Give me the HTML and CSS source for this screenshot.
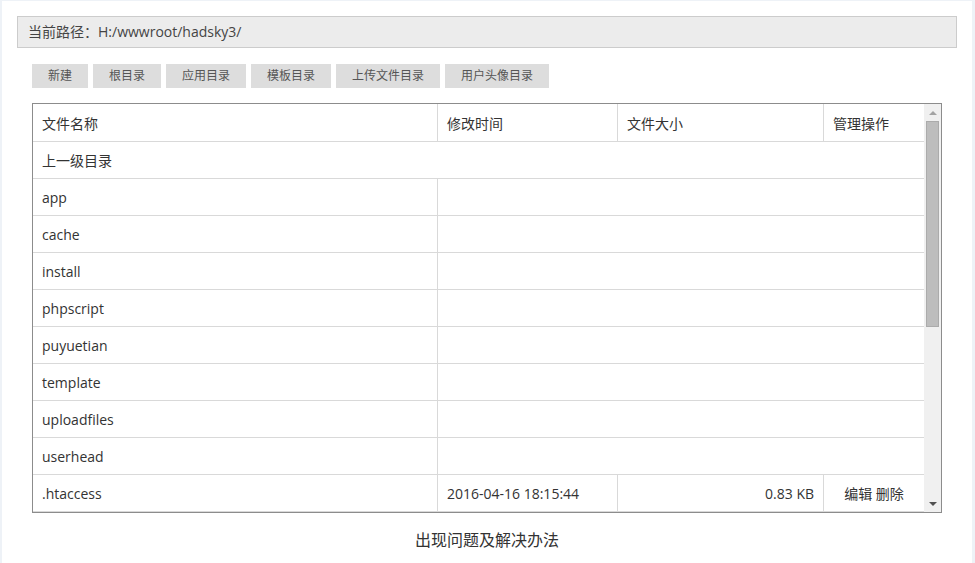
FILE: index.html
```html
<!DOCTYPE html>
<html lang="zh-CN">
<head>
<meta charset="utf-8">
<title>文件管理</title>
<link rel="stylesheet" href="styles.css">
</head>
<body>
<div class="panel">
  <div class="path">当前路径：H:/wwwroot/hadsky3/</div>
  <div class="inner">
    <div class="btns">
      <span class="btn">新建</span>
      <span class="btn">根目录</span>
      <span class="btn">应用目录</span>
      <span class="btn">模板目录</span>
      <span class="btn">上传文件目录</span>
      <span class="btn">用户头像目录</span>
    </div>
    <div class="box">
      <div class="tarea">
        <table class="files">
          <colgroup><col class="c1"><col class="c2"><col class="c3"><col class="c4"></colgroup>
          <tr class="head"><td>文件名称</td><td>修改时间</td><td>文件大小</td><td class="last">管理操作</td></tr>
          <tr><td colspan="4" class="last">上一级目录</td></tr>
          <tr><td>app</td><td colspan="3" class="last"></td></tr>
          <tr><td>cache</td><td colspan="3" class="last"></td></tr>
          <tr><td>install</td><td colspan="3" class="last"></td></tr>
          <tr><td>phpscript</td><td colspan="3" class="last"></td></tr>
          <tr><td>puyuetian</td><td colspan="3" class="last"></td></tr>
          <tr><td>template</td><td colspan="3" class="last"></td></tr>
          <tr><td>uploadfiles</td><td colspan="3" class="last"></td></tr>
          <tr><td>userhead</td><td colspan="3" class="last"></td></tr>
          <tr><td>.htaccess</td><td>2016-04-16 18:15:44</td><td class="num">0.83 KB</td><td class="last ops"><a>编辑</a> <a>删除</a></td></tr>
        </table>
      </div>
      <div class="sbar">
        <div class="sbtn"><span class="up"></span></div>
        <div class="track"><div class="thumb"></div></div>
        <div class="sbtn"><span class="down"></span></div>
      </div>
    </div>
    <div class="help">出现问题及解决办法</div>
  </div>
</div>
</body>
</html>
```
FILE: styles.css
```css
html, body {
  margin: 0;
  padding: 0;
}
body {
  background: #eef2f7;
  font-family: "Open Sans", "Noto Sans CJK SC", sans-serif;
  color: #333;
  height: 563px;
  overflow: hidden;
}
.panel {
  background: #fff;
  margin: 1px 3px 0 2px;
  padding: 15px;
  height: 562px;
  box-sizing: border-box;
}
.path {
  height: 30px;
  line-height: 30px;
  border: 1px solid #cccccc;
  background: #ececec;
  padding-left: 10px;
  font-size: 14px;
  color: #444;
}
.inner {
  padding: 0 15px;
}
.btns {
  display: flex;
  gap: 5px;
  margin-top: 16px;
}
.btn {
  display: block;
  height: 24px;
  line-height: 24px;
  padding: 0 16px;
  background: #dddddd;
  color: #555;
  font-size: 12px;
}
.box {
  margin-top: 15px;
  height: 408px;
  border: 1px solid #8c8c8c;
  display: flex;
}
.tarea {
  flex: 1;
  overflow: hidden;
}
.files {
  width: 100%;
  table-layout: fixed;
  border-collapse: separate;
  border-spacing: 0;
  font-size: 14px;
}
.c1 { width: 405px; }
.c2 { width: 180px; }
.c3 { width: 206px; }
.files td {
  height: 37px;
  padding: 0 9px;
  border-right: 1px solid #d9d9d9;
  border-bottom: 1px solid #d9d9d9;
  white-space: nowrap;
  box-sizing: border-box;
}
.files tr.head td {
  height: 38px;
  padding-top: 1px;
}
.files td.last {
  border-right: none;
}
.files td.num {
  text-align: right;
}
.files td.ops {
  text-align: center;
}
.sbar {
  width: 17px;
  background: #f0f0f0;
  display: flex;
  flex-direction: column;
}
.sbtn {
  height: 17px;
  display: flex;
  align-items: center;
  justify-content: center;
}
.up {
  width: 0;
  height: 0;
  border-left: 4px solid transparent;
  border-right: 4px solid transparent;
  border-bottom: 4px solid #a3a3a3;
}
.down {
  width: 0;
  height: 0;
  border-left: 4px solid transparent;
  border-right: 4px solid transparent;
  border-top: 4px solid #505050;
}
.track {
  flex: 1;
}
.thumb {
  margin: 0 2px;
  height: 204px;
  background: #bdbdbd;
  border: 1px solid #ababab;
}
.help {
  margin-top: 15px;
  text-align: center;
  font-size: 16px;
  line-height: 24px;
  color: #333;
}
```
